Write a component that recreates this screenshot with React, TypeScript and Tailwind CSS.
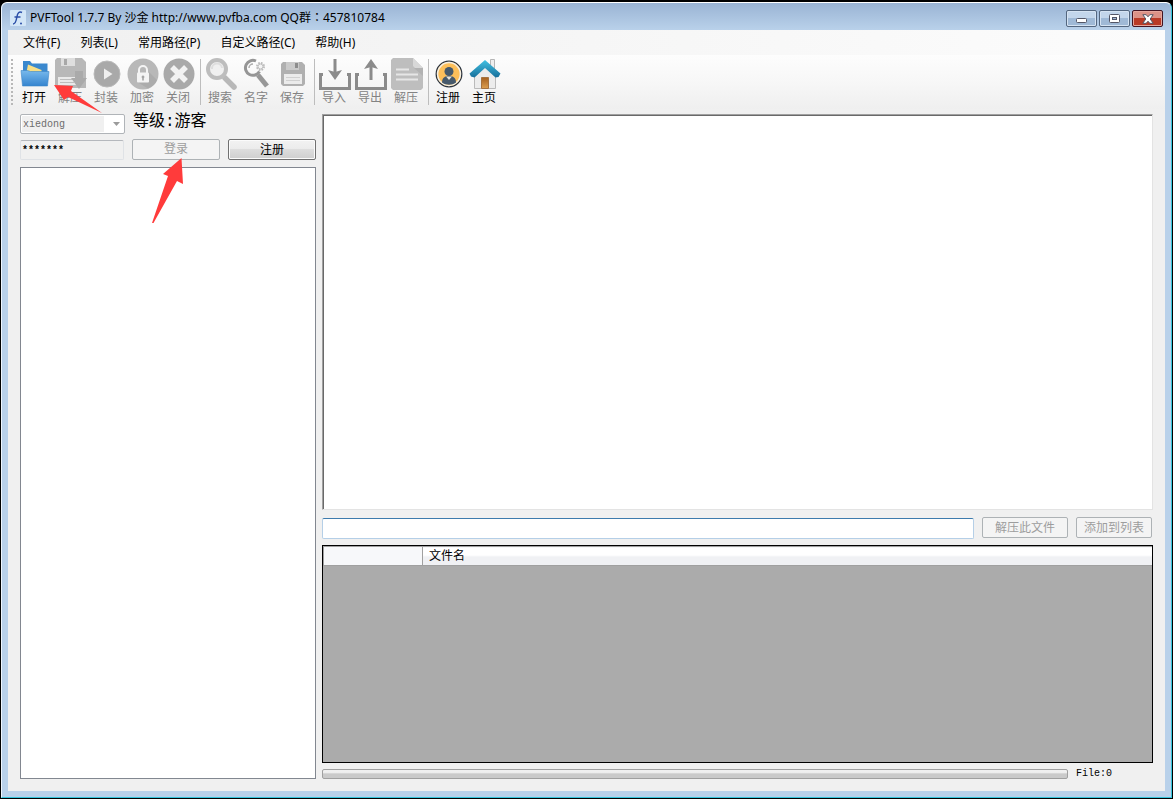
import React, { useState } from "react";

const uiFont = "font-['Noto_Sans','Noto_Sans_CJK_SC',sans-serif]";

const OpenIcon = () => (
  <svg width="32" height="32" viewBox="0 0 32 32" aria-hidden="true">
    <defs>
      <linearGradient id="folder" x1="0" y1="0" x2="0" y2="1">
        <stop offset="0" stopColor="#78b9ec" />
        <stop offset="1" stopColor="#3484cf" />
      </linearGradient>
    </defs>
    <path d="M4 3h7l2 2.500h15.500V20H4z" fill="#3a88ce" />
    <path d="M9 6.500l13.500 5.500v2H7.500z" fill="#f8df86" />
    <path d="M2 12.500h6.500l3 1H30L28.500 28h-25z" fill="url(#folder)" stroke="#3c86c8" strokeWidth="0.6" />
  </svg>
);

const UnpackIcon = () => (
  <svg width="32" height="32" viewBox="0 0 32 32" aria-hidden="true">
    <path d="M2 0h25l4 4v26H19l-17-1L0 27V2z" fill="#b8b8b8" />
    <path d="M6 0h14v8H6z" fill="#dedede" />
    <path d="M9 1h3v6H9z" fill="#a8a8a8" />
    <path d="M3 19h18v8H3z" fill="#e9e9e9" />
    <path d="M5 21.500h13M5 24.500h14" stroke="#bdbdbd" />
    <path d="M20 13h8v7h4l-8 11-8-11h4z" fill="#aaaaaa" />
  </svg>
);

const PackIcon = () => (
  <svg width="32" height="32" viewBox="0 0 32 32" aria-hidden="true">
    <circle cx="16" cy="16" r="13" fill="#a9a9a9" stroke="#b9b9b9" />
    <path d="M13 10.500l8.500 5.500-8.500 5.500z" fill="#efefef" />
  </svg>
);

const LockIcon = () => (
  <svg width="32" height="32" viewBox="0 0 32 32" aria-hidden="true">
    <circle cx="16" cy="16" r="15.500" fill="#b8b8b8" />
    <path d="M22 14l8 8a15.500 15.500 0 0 1-9 8.500l-10-6z" fill="#acacac" />
    <path d="M12 15v-3a4 4 0 0 1 8 0v3" fill="none" stroke="#f4f4f4" strokeWidth="2" />
    <rect x="10" y="14.500" width="12" height="10" rx="1" fill="#f4f4f4" />
    <path d="M16 17.500a1.500 1.500 0 0 1 .8 2.700V22.500h-1.600v-2.300a1.500 1.500 0 0 1 .8-2.700z" fill="#a5a5a5" />
  </svg>
);

const CloseIcon = () => (
  <svg width="32" height="32" viewBox="0 0 32 32" aria-hidden="true">
    <circle cx="16" cy="16" r="15.500" fill="#a9a9a9" />
    <path d="M9 9l14 14M23 9L9 23" stroke="#f2f2f2" strokeWidth="5.500" />
  </svg>
);

const SearchIcon = () => (
  <svg width="32" height="32" viewBox="0 0 32 32" aria-hidden="true">
    <path d="M20 20l9 9" stroke="#b8b8b8" strokeWidth="5.500" strokeLinecap="round" />
    <circle cx="12" cy="11" r="9" fill="#f0f0f0" stroke="#bdbdbd" strokeWidth="4" />
    <path d="M7 11a5 5 0 0 1 10-1" fill="none" stroke="#dedede" strokeWidth="2" />
  </svg>
);

const RenameIcon = () => (
  <svg width="32" height="32" viewBox="0 0 32 32" aria-hidden="true">
    <path d="M17 17l9 11" stroke="#979797" strokeWidth="5" />
    <path d="M15 3a7.500 7.500 0 1 0 3.500 10.500" fill="none" stroke="#959595" strokeWidth="3" />
    <path d="M8 10a4 4 0 0 1 4-4" fill="none" stroke="#adadad" strokeWidth="1.500" />
    <circle cx="19.500" cy="8.500" r="3.500" fill="none" stroke="#bcbcbc" strokeWidth="2" strokeDasharray="1.600 1.150" />
    <circle cx="19.500" cy="8.500" r="2.500" fill="#f4f4f4" stroke="#bcbcbc" />
  </svg>
);

const SaveIcon = () => (
  <svg width="32" height="32" viewBox="0 0 32 32" aria-hidden="true">
    <path d="M6 4h19l3 3v19l-2 2H6l-2-2V6z" fill="#b0b0b0" />
    <path d="M9 4h13v8H9z" fill="#cacaca" />
    <path d="M18 5h3v5h-3z" fill="#8d8d8d" />
    <path d="M7 16h18v10H7z" fill="#ebebeb" />
    <path d="M9 19.500h14M9 22.500h14" stroke="#d0d0d0" />
  </svg>
);

const ImportIcon = () => (
  <svg width="32" height="32" viewBox="0 0 32 32" aria-hidden="true">
    <path d="M4 16.500H1.500v14h29v-14H28" fill="none" stroke="#8b8b8b" strokeWidth="3" />
    <path d="M16 1v14" stroke="#8b8b8b" strokeWidth="3" />
    <path d="M9 12l7 2 7-2-7 10z" fill="#8b8b8b" />
  </svg>
);

const ExportIcon = () => (
  <svg width="32" height="32" viewBox="0 0 32 32" aria-hidden="true">
    <path d="M4 16.500H1.500v14h29v-14H28" fill="none" stroke="#8b8b8b" strokeWidth="3" />
    <path d="M16 8v14" stroke="#8b8b8b" strokeWidth="3" />
    <path d="M9 11l7-10 7 10-7-2z" fill="#8b8b8b" />
  </svg>
);

const DocumentIcon = () => (
  <svg width="32" height="32" viewBox="0 0 32 32" aria-hidden="true">
    <path d="M2 0h20l10 10v20l-2 2H2l-2-2V2z" fill="#bebebe" />
    <path d="M22 0v8l2 2h8z" fill="#d8d8d8" />
    <path d="M23 10h9v8z" fill="#b2b2b2" />
    <path d="M5 11.500h13M5 16.500h22M5 21.500h22" stroke="#e6e6e6" strokeWidth="2" />
  </svg>
);

const RegisterIcon = () => (
  <svg width="32" height="32" viewBox="0 0 32 32" aria-hidden="true">
    <circle cx="16" cy="16" r="12.800" fill="#fdbf5a" stroke="#2b3440" strokeWidth="1.300" />
    <circle cx="16" cy="16" r="11.400" fill="none" stroke="#f5f0e5" strokeWidth="1.500" />
    <path d="M9 24.500c0-5 3-6.500 7-6.500s7 1.500 7 6.500c-4 3-10 3-14 0z" fill="#46596b" />
    <path d="M13 18.500h6L16 22z" fill="#e9e2d6" />
    <circle cx="16" cy="13.500" r="4.500" fill="#46596b" />
  </svg>
);

const HomeIcon = () => (
  <svg width="32" height="32" viewBox="0 0 32 32" aria-hidden="true">
    <defs>
      <linearGradient id="roof" x1="0" y1="0" x2="0" y2="1">
        <stop offset="0" stopColor="#42c1e2" />
        <stop offset="1" stopColor="#176f9b" />
      </linearGradient>
      <linearGradient id="door" x1="0" y1="0" x2="0" y2="1">
        <stop offset="0" stopColor="#a5601f" />
        <stop offset="1" stopColor="#dda052" />
      </linearGradient>
    </defs>
    <path d="M21.500 1.500h4V12h-4z" fill="#eeeeee" stroke="#b5b5b5" />
    <path d="M5.500 15L16 6l10.500 9v15.500h-21z" fill="#ececec" stroke="#bababa" />
    <path d="M12.500 19.500h7v11h-7z" fill="url(#door)" stroke="#a5723f" />
    <path d="M0.500 15.500L16 2l15.500 13.500-2 3.500-3 0.500L16 10 5.500 19.500 2 18.500z" fill="url(#roof)" />
  </svg>
);

const toolGroups = [
  [
    { label: "打开", icon: <OpenIcon />, enabled: true },
    { label: "解压", icon: <UnpackIcon />, enabled: false },
    { label: "封装", icon: <PackIcon />, enabled: false },
    { label: "加密", icon: <LockIcon />, enabled: false },
    { label: "关闭", icon: <CloseIcon />, enabled: false },
  ],
  [
    { label: "搜索", icon: <SearchIcon />, enabled: false },
    { label: "名字", icon: <RenameIcon />, enabled: false },
    { label: "保存", icon: <SaveIcon />, enabled: false },
  ],
  [
    { label: "导入", icon: <ImportIcon />, enabled: false },
    { label: "导出", icon: <ExportIcon />, enabled: false },
    { label: "解压", icon: <DocumentIcon />, enabled: false },
  ],
  [
    { label: "注册", icon: <RegisterIcon />, enabled: true },
    { label: "主页", icon: <HomeIcon />, enabled: true },
  ],
];

const menus = ["文件(F)", "列表(L)", "常用路径(P)", "自定义路径(C)", "帮助(H)"];

const TitleBar = () => (
  <header className="flex h-[27px] items-start justify-between rounded-t-md bg-linear-to-b from-[#9ab4d4] to-[#b9d1ea] pl-2">
    <div className="flex items-center gap-1 pt-[7px]">
      <svg width="16" height="16" viewBox="0 0 16 16" aria-hidden="true">
        <rect width="16" height="16" rx="1" fill="#d3e6f7" />
        <path d="M12 2.500C9 1 7.500 3.500 7 6.500S5.500 14 3 14M4.500 7h6" fill="none" stroke="#2b4fa8" strokeWidth="1.500" />
        <circle cx="11" cy="13.500" r="1" fill="#2b4fa8" />
      </svg>
      <h1 className="font-['Noto_Sans','Noto_Sans_CJK_TC',sans-serif] text-xs leading-4 text-black">
        PVFTool 1.7.7 By 沙金 http://www.pvfba.com QQ群：457810784
      </h1>
    </div>
    <div className="flex gap-0.5 pt-[7px] pr-2">
      <button aria-label="Minimize" className="flex h-[17px] w-[31px] items-end justify-center rounded-xs border border-[#53667f] bg-linear-to-b from-[#c3d6eb] from-50% to-[#9fb9d6] to-50% pb-[3px] shadow-[inset_0_0_0_1px_#d5e3f2]">
        <svg width="11" height="5" viewBox="0 0 11 5">
          <rect x="0.500" y="0.500" width="10" height="4" rx="1" fill="#fff" stroke="#535666" />
        </svg>
      </button>
      <button aria-label="Maximize" className="flex h-[17px] w-[31px] items-center justify-center rounded-xs border border-[#53667f] bg-linear-to-b from-[#c3d6eb] from-50% to-[#9fb9d6] to-50% shadow-[inset_0_0_0_1px_#d5e3f2]">
        <svg width="11" height="9" viewBox="0 0 11 9">
          <rect x="0.500" y="0.500" width="10" height="8" rx="1" fill="#fff" stroke="#535666" />
          <rect x="3.500" y="3.500" width="4" height="2" fill="#9fb9d6" stroke="#535666" />
        </svg>
      </button>
      <button aria-label="Close" className="flex h-[17px] w-[31px] items-center justify-center rounded-xs border border-[#431422] bg-linear-to-b from-[#dc9287] from-50% to-[#b93a26] to-50% shadow-[inset_0_0_0_1px_#e5a69c]">
        <svg width="12" height="10" viewBox="0 0 12 10">
          <path d="M0.800 0.700h3.400L6 2.800 7.800 0.700h3.400L8.200 5l3 4.300H7.800L6 7.200 4.200 9.300H0.800l3-4.300z" fill="#fff" stroke="#535666" />
        </svg>
      </button>
    </div>
  </header>
);

const Toolbar = () => (
  <div className="flex h-[54px] bg-linear-to-b from-[#fdfdfd] via-[#f7f7f7] to-[#efefef] pl-[3px]" role="toolbar">
    <div className="my-1 mr-[3px] w-0.5 bg-[repeating-linear-gradient(to_bottom,#b8b8b8_0_2px,transparent_2px_4px)]" />
    {toolGroups.map((group, i) => (
      <div key={i} className="flex">
        {i > 0 && <div className="my-1 mr-px ml-1 w-px bg-[#bdbdbd]" />}
        {group.map((tool, j) => (
          <button
            key={j}
            disabled={!tool.enabled}
            className="flex w-9 flex-col items-center pt-[3px] text-xs leading-4 text-black disabled:text-[#838383]"
          >
            <span className="pl-0.5">{tool.icon}</span>
            <span>{tool.label}</span>
          </button>
        ))}
      </div>
    ))}
  </div>
);

const LoginPanel = () => {
  const [user, setUser] = useState("xiedong");

  return (
    <aside className="flex w-[296px] shrink-0 flex-col">
      <div className="flex h-5 gap-2">
        <div className="grid w-[105px] items-center">
          <select
            disabled
            aria-label="账号"
            value={user}
            onChange={(e) => setUser(e.target.value)}
            className="col-start-1 row-start-1 h-5 appearance-none rounded-xs border border-[#b0b4b8] bg-[#f0f0f0] px-0.5 font-['Liberation_Mono',monospace] text-[10px] text-[#6d6d6d] opacity-100 shadow-[inset_0_0_0_1px_#fff,inset_-20px_0_0_#fff]"
          >
            <option value="xiedong">xiedong</option>
          </select>
          <svg className="pointer-events-none col-start-1 row-start-1 mr-[5px] justify-self-end" width="7" height="4" viewBox="0 0 7 4">
            <path d="M0 0h7L3.500 4z" fill="#9b9b9b" />
          </svg>
        </div>
        <span className="font-['Liberation_Mono','Noto_Sans_CJK_SC',monospace] text-base leading-4 text-black">等级:游客</span>
      </div>
      <div className="mt-[5px] flex gap-2">
        <input
          disabled
          aria-label="密码"
          defaultValue="*******"
          className="mt-px h-5 w-[104px] rounded-xs border border-[#dfe2e6] border-t-[#b5b8bd] bg-[#f0f0f0] px-px font-['Liberation_Mono',monospace] text-[10px] font-bold text-black"
        />
        <button disabled className="h-[21px] flex-1 rounded-xs border border-[#adb2b5] bg-[#f4f4f4] pb-0.5 text-xs leading-4 text-[#9d9d9d]">
          登录
        </button>
        <button className="h-[21px] flex-1 rounded-xs border border-[#707070] bg-[linear-gradient(to_bottom,#f2f2f2,#ebebeb_50%,#dddddd_50%,#cfcfcf)] text-xs leading-4 text-black shadow-[inset_0_0_0_1px_#fbfbfb]">
          注册
        </button>
      </div>
      <div className="mt-[7px] flex-1 border border-[#828790] bg-white" />
    </aside>
  );
};

const FilePanel = () => (
  <main className="flex min-w-0 flex-1 flex-col">
    <textarea
      aria-label="文件内容"
      className="flex-1 resize-none border border-[#e3e3e3] border-t-[#a0a0a0] border-l-[#a0a0a0] bg-white p-1 shadow-[inset_1px_1px_0_#696969] outline-none"
    />
    <div className="mt-[7px] flex gap-2">
      <input
        aria-label="文件路径"
        className="mt-px h-[21px] min-w-0 flex-1 rounded-xs border border-[#b5cfe7] border-t-[#3d7bad] bg-white px-1 text-xs outline-none"
      />
      <button disabled className="h-[21px] w-[86px] rounded-xs border border-[#adb2b5] bg-[#f4f4f4] text-xs leading-4 text-[#9d9d9d]">
        解压此文件
      </button>
      <button disabled className="mr-px h-[21px] w-[76px] rounded-xs border border-[#adb2b5] bg-[#f4f4f4] text-xs leading-4 text-[#9d9d9d]">
        添加到列表
      </button>
    </div>
    <div className="mt-1.5 h-[218px] border border-black bg-[#ababab]">
      <table className="w-full border-collapse text-xs leading-4">
        <thead>
          <tr className="h-[19px] border-t border-b border-[#a0a0a0]">
            <th className="w-[99px] border-r border-l border-[#a0a0a0] bg-[#f7f8fa] p-0" />
            <th className="bg-linear-to-b from-white from-45% to-[#f0f1f4] to-50% py-0 pl-1.5 text-left font-normal">文件名</th>
          </tr>
        </thead>
      </table>
    </div>
    <div className="mt-1.5 flex h-2.5 items-center gap-2">
      <div
        role="progressbar"
        aria-label="进度"
        aria-valuenow={0}
        className="h-2.5 flex-1 rounded-xs border border-[#a0a0a0] bg-linear-to-b from-[#f0f0f0] from-30% to-[#cacaca] to-50%"
      />
      <span className="w-[77px] font-['Liberation_Mono',monospace] text-[10px] leading-3 text-black">File:0</span>
    </div>
  </main>
);

const App = () => {
  return (
    <div className={`${uiFont} relative flex min-h-screen flex-col bg-black px-px pt-0.5 pb-px`}>
      <div className="flex flex-1 flex-col rounded-t-md border-t border-r border-b border-l border-t-white border-r-[#35c5dc] border-b-[#35c5dc] border-l-[#eef6ff] bg-[#b9d1ea]">
        <TitleBar />
        <div className="mx-1.5 mb-1.5 flex flex-1 flex-col bg-[#f0f0f0]">
          <nav className="flex h-[25px] items-center gap-5 bg-linear-to-r from-[#f0f0f0] to-[#fcfcfc] pl-[15px] text-xs leading-4 text-black">
            {menus.map((menu) => (
              <button key={menu}>{menu}</button>
            ))}
          </nav>
          <Toolbar />
          <div className="flex flex-1 gap-1.5 px-3 pt-[5px] pb-3">
            <LoginPanel />
            <FilePanel />
          </div>
        </div>
      </div>

      {/* hint arrows over the open and login buttons */}
      <svg className="pointer-events-none absolute top-0 left-0" width="200" height="240" viewBox="0 0 200 240" aria-hidden="true">
        <path d="M54 85l19 1-2 5 31 22-34-16-4 3z" fill="#ff3b3b" />
        <path d="M181.500 158l-18.500 16 5 2-16 47h1.500L177 181l6 3z" fill="#ff3b3b" />
      </svg>
    </div>
  );
};

export default App;
